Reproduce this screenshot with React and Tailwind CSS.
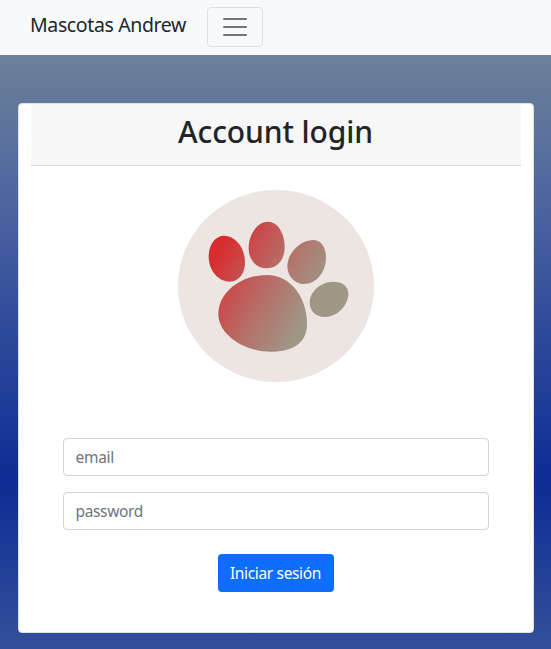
function PawLogo() {
  return (
    <svg className="block h-[192px] w-[196px]" viewBox="24 30 588 576" aria-hidden="true">
      <defs>
        <linearGradient id="paw" gradientUnits="userSpaceOnUse" x1="140" y1="220" x2="425" y2="375">
          <stop offset="0" stopColor="#d82c2e" />
          <stop offset="0.25" stopColor="#c94b4b" />
          <stop offset="0.6" stopColor="#b5716a" />
          <stop offset="1" stopColor="#9f9685" />
        </linearGradient>
      </defs>
      <ellipse cx="318" cy="318" rx="294" ry="288" fill="#ece5e2" />
      <g fill="url(#paw)">
        <path d="M163 167C198 168 224 204 225 244C226 280 207 305 179 305C145 305 116 272 116 229C117 191 136 167 163 167Z" />
        <path d="M295 125C325 126 344 163 344 201C344 240 321 265 290 265C258 265 236 239 236 204C236 163 263 124 295 125Z" />
        <path d="M428 180C455 180 468 203 468 235C467 277 439 312 403 312C371 312 352 286 352 257C353 219 391 181 428 180Z" />
        <path d="M488 305C518 304 536 320 535 343C533 379 501 411 465 411C436 411 419 392 419 367C420 334 453 306 488 305Z" />
        <path d="M290 285C363 285 411 354 411 431C411 488 369 515 303 515C220 515 145 463 145 402C146 334 215 286 290 285Z" />
      </g>
    </svg>
  );
}

export default function App() {
  return (
    <div className="flex h-[649px] flex-col bg-[linear-gradient(180deg,#6c8098_55px,#5f759b_120px,#4f67a0_190px,#0d2c95_480px,#34509a_649px)] font-['Noto_Sans','Open_Sans',sans-serif] text-[#212529]">
      <nav className="flex h-[55px] shrink-0 items-center bg-[#f8f9fa] pb-px pl-[30px]">
        <a className="w-[177px] whitespace-nowrap pb-[4px] text-[19.5px] leading-[30px] tracking-[-0.37px]">
          Mascotas Andrew
        </a>
        <button
          aria-label="Menu"
          className="flex h-10 w-14 items-center justify-center rounded-[4px] border border-[#dedfe0]"
        >
          <svg className="h-[30px] w-[30px]" viewBox="0 0 30 30" fill="none" stroke="#737475" strokeWidth="2" strokeLinecap="round">
            <path d="M4 7h22M4 15h22M4 23h22" />
          </svg>
        </button>
      </nav>
      <main className="mx-auto mt-12 flex h-[530px] w-[516px] flex-col items-center rounded-[4px] border border-[#dfdfdf] bg-white px-3">
        <header className="h-[62px] w-full border-b border-[#d9d9d9] bg-[#f7f7f7] pt-[9px] text-center">
          <h1 className="whitespace-nowrap text-[30px] font-medium leading-[38px] tracking-[-0.1px]">
            Account login
          </h1>
        </header>
        <div className="mt-6">
          <PawLogo />
        </div>
        <form className="mt-14 flex w-[426px] flex-col items-center">
          <input
            placeholder="email"
            className="h-[38px] w-full rounded-[4px] border border-[#ced4da] px-3 text-[15.5px] tracking-[-0.3px] placeholder:text-[#6c757d]"
          />
          <input
            type="password"
            placeholder="password"
            className="mt-4 h-[38px] w-full rounded-[4px] border border-[#ced4da] px-3 text-[15.5px] tracking-[-0.35px] placeholder:text-[#6c757d]"
          />
          <button
            type="button"
            className="mt-6 h-[38px] w-[116px] whitespace-nowrap rounded-[4px] bg-[#0d6efd] pt-0.5 text-[15.5px] tracking-[-0.35px] text-white"
          >
            Iniciar sesión
          </button>
        </form>
      </main>
    </div>
  );
}
